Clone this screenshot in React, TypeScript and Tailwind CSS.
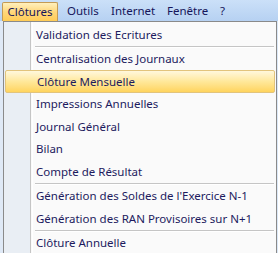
import React from "react";

const font = { fontFamily: '"Noto Sans", "Open Sans", sans-serif' };

type Entry = { label: string; active?: boolean } | "sep";

const entries: Entry[] = [
  { label: "Validation des Ecritures" },
  "sep",
  { label: "Centralisation des Journaux" },
  { label: "Clôture Mensuelle", active: true },
  { label: "Impressions Annuelles" },
  { label: "Journal Général" },
  { label: "Bilan" },
  { label: "Compte de Résultat" },
  "sep",
  { label: "Génération des Soldes de l'Exercice N-1" },
  { label: "Génération des RAN Provisoires sur N+1" },
  "sep",
  { label: "Clôture Annuelle" },
];

export default function App() {
  return (
    <div
      className="w-[278px] h-[253px] overflow-hidden bg-[#dbe8f7] text-[11.5px] text-[#1d1b5e] flex flex-col"
      style={font}
    >
      <div className="h-[21px] shrink-0 bg-gradient-to-b from-[#cbe0f8] to-[#b6d1f2] flex items-center pl-[2px] text-[#15155a]">
        <div className="w-[56px] h-[19px] mt-[2px] flex items-center justify-center rounded-t-[2px] border border-[#c49b55] border-b-0 bg-gradient-to-b from-[#fff0bd] via-[#ffd77a] to-[#ffcc55]">
          Clôtures
        </div>
        <div className="w-[46px] pl-[9px]">Outils</div>
        <div className="w-[56px] pl-[7px]">Internet</div>
        <div className="w-[53px] pl-[7px]">Fenêtre</div>
        <div className="pl-[7px]">?</div>
      </div>
      <div className="flex flex-1 min-h-0">
        <div className="w-[3px] shrink-0 bg-[#dfe9f6]" />
        <div className="w-[274px] border-l border-t border-r border-[#8a8a8a] bg-[#fafafa] relative flex flex-col">
          <div className="absolute left-0 top-0 bottom-0 w-[27px] bg-[#e9eef4] border-r border-[#c5c5c5]" />
          <div className="absolute left-[28px] top-0 bottom-0 w-px bg-white" />
          <div className="relative flex flex-col pt-[1px]">
            {entries.map((e, i) =>
              e === "sep" ? (
                <div key={i} className="h-[2px] ml-[31px] mr-[2px] flex flex-col shrink-0">
                  <div className="h-px bg-[#c5c5c5]" />
                  <div className="h-px bg-white" />
                </div>
              ) : (
                <div
                  key={i}
                  className={
                    "h-[22.5px] shrink-0 flex items-center mx-[1px] pl-[31px] " +
                    (e.active
                      ? "rounded-[2px] border border-[#e2c47c] bg-gradient-to-b from-[#fff8dc] via-[#ffe89a] to-[#ffd45c] pl-[30px]"
                      : "")
                  }
                >
                  {e.label}
                </div>
              )
            )}
          </div>
        </div>
      </div>
    </div>
  );
}
